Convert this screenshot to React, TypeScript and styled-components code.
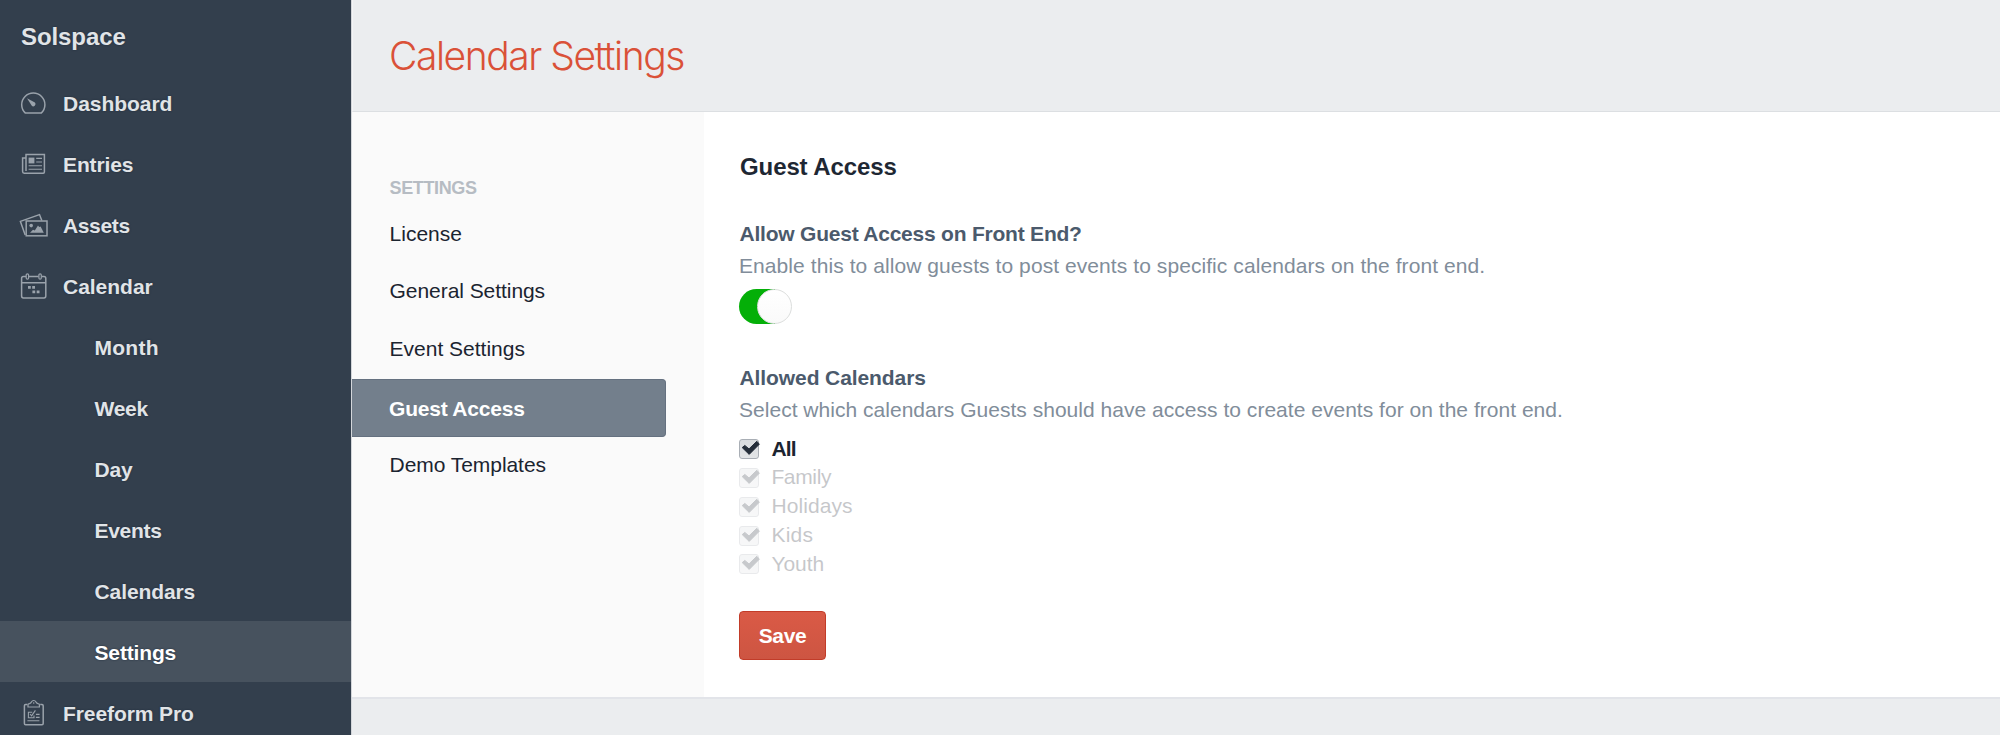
import React from 'react';
import styled, { createGlobalStyle, css } from 'styled-components';

const GlobalStyle = createGlobalStyle`
  * { box-sizing: border-box; }
  body {
    margin: 0;
    overflow: hidden;
    background: #ebedef;
    font-family: "Liberation Sans", Arial, sans-serif;
    font-size: 21px;
    color: #1b2430;
  }
`;

const Page = styled.div`
  display: flex;
  width: 100%;
  height: 735px;
  overflow: hidden;
`;

const Sidebar = styled.nav`
  flex: none;
  width: 351px;
  height: 735px;
  overflow: hidden;
  background: #333f4d;
  color: #e1e4e7;
  font-weight: bold;
  text-shadow: 0 0 2px #1d2a3a;
`;

const SiteName = styled.div`
  height: 72px;
  padding: 8px 0 0 21px;
  font-size: 24px;
  line-height: 57px;
  letter-spacing: -0.08px;
`;

const NavItem = styled.div<{ $nested?: boolean; $active?: boolean }>`
  display: flex;
  align-items: flex-start;
  gap: 12px;
  height: 61px;
  padding-left: ${p => (p.$nested ? 94.5 : 17)}px;
  ${p =>
    p.$active &&
    css`
      background: #47525e;
      color: #fff;
    `}
`;

const NavLabel = styled.span<{ $track: number }>`
  padding-top: 2px;
  line-height: 59px;
  letter-spacing: ${p => p.$track}px;
  white-space: nowrap;
`;

const NavIcon = styled.svg`
  flex: none;
  width: 34px;
  height: 34px;
  margin-top: 13px;
  fill: none;
  stroke: #9aa2ab;
  stroke-width: 1.5;
`;

const Main = styled.div`
  flex: 1;
  display: flex;
  flex-direction: column;
  border-left: 1px solid #d3d6da;
`;

const Header = styled.header`
  height: 112px;
  padding: 32px 0 0 36px;
  border-left: 1px solid #f3f4f5;
  border-bottom: 1px solid #dcdfe2;
`;

const Title = styled.h1`
  margin: 0;
  font: 300 39px/47px Inter, "Liberation Sans", sans-serif;
  letter-spacing: -1.46px;
  color: #da5138;
`;

const Pane = styled.div`
  display: flex;
  height: 587px;
  background: #fff;
  border-bottom: 2px solid #e2e4e9;
`;

const SubNav = styled.aside`
  flex: none;
  width: 352px;
  padding-top: 66px;
  background: #fafafa;
`;

const SubNavHeading = styled.div`
  height: 27.6px;
  padding-left: 37.6px;
  font-size: 18px;
  font-weight: bold;
  line-height: 20px;
  letter-spacing: -0.38px;
  color: #b6bcc3;
`;

const SubNavItem = styled.div<{ $active?: boolean; $track: number }>`
  height: 57.75px;
  padding-left: 37.6px;
  line-height: 55px;
  letter-spacing: ${p => p.$track}px;
  ${p =>
    p.$active &&
    css`
      width: 313.5px;
      padding-left: 37px;
      line-height: 57px;
      font-weight: bold;
      color: #fff;
      background: #737f8c;
      border: 1px solid #657180;
      border-left-width: 0;
      border-radius: 0 4px 4px 0;
    `}
`;

const Content = styled.main`
  padding: 41px 0 0 35px;
`;

const SectionTitle = styled.h2`
  margin: 0 0 37.7px;
  padding-left: 1px;
  font-size: 24px;
  line-height: 27px;
  letter-spacing: -0.1px;
  color: #1e2733;
`;

const Field = styled.section`
  & + & {
    margin-top: 37.8px;
  }
`;

const FieldTitle = styled.h3<{ $track: number }>`
  margin: 0 0 1.5px;
  padding-left: 0.5px;
  font-size: 21px;
  line-height: 31px;
  letter-spacing: ${p => p.$track}px;
  color: #4b5a6c;
`;

const FieldHelp = styled.p<{ $track: number }>`
  margin: 0;
  line-height: 31px;
  letter-spacing: ${p => p.$track}px;
  color: #818d9a;
`;

const Toggle = styled.div`
  display: flex;
  justify-content: flex-end;
  width: 53px;
  height: 35px;
  margin-top: 7.8px;
  border-radius: 18px;
  background: linear-gradient(90deg, #04af08 36px, #fff 36px);
`;

const Knob = styled.span`
  width: 35px;
  height: 35px;
  border: 1px solid #dcdedd;
  border-radius: 50%;
  background: linear-gradient(#fff, #fafafa);
`;

const Options = styled.div`
  margin: 9.3px 0 32px;
`;

const Option = styled.label<{ $disabled?: boolean; $track: number }>`
  display: flex;
  align-items: flex-start;
  height: 28.85px;
  line-height: 27px;
  letter-spacing: ${p => p.$track}px;
  font-weight: ${p => (p.$disabled ? 'normal' : 'bold')};
  opacity: ${p => (p.$disabled ? 0.25 : 1)};
`;

const CheckBox = styled.span`
  flex: none;
  display: block;
  width: 20px;
  height: 20px;
  margin: 4.4px 12.4px 0 0;
  border: 1px solid #a9aeb5;
  border-radius: 3px;
  background: linear-gradient(#d9dcdf, #e2e4e6);
`;

const CheckMark = styled.svg`
  display: block;
  width: 21px;
  height: 18px;
  overflow: visible;
  fill: #252e3a;
  stroke: #252e3a;
  stroke-width: 1;
  stroke-linejoin: round;
`;

const SaveButton = styled.button`
  display: block;
  width: 87px;
  height: 49px;
  padding: 1px 0 0;
  border: 1px solid #c23c29;
  border-radius: 4px;
  background: linear-gradient(#da5a46, #cd5542);
  color: #fff;
  font: bold 21px/45px "Liberation Sans", Arial, sans-serif;
  letter-spacing: -0.4px;
`;

const GaugeIcon = () => (
  <NavIcon viewBox="0 0 34 34">
    <path d="M8.2 27.9 A11.6 11.6 0 1 1 24.4 27.9 Z" strokeLinejoin="round" />
    <path d="M10 13.3 L17.9 17.6 A2.1 2.1 0 1 1 14.6 20.6 Z" fill="#9aa2ab" stroke="none" />
  </NavIcon>
);

const NewsIcon = () => (
  <NavIcon viewBox="0 0 34 34">
    <path d="M9 24 V8.6 H27.4 V26 Q27.4 27.2 26.2 27.2 H7.2 Q5.6 27.2 5.6 25.6 V12 H9 M9 24 V25" />
    <rect x="11.6" y="11.6" width="5.8" height="5.8" fill="#9aa2ab" stroke="none" />
    <path d="M19.2 12.4 H25 M19.2 16 H25 M11.6 19.8 H25 M11.6 23.2 H25" strokeWidth="1.1" />
  </NavIcon>
);

const PhotosIcon = () => (
  <NavIcon viewBox="0 0 34 34">
    <path d="M8.2 28 L3.4 14.4 L22.5 7.6 L24.8 13.6" />
    <rect x="9.2" y="14" width="20.8" height="14.8" />
    <circle cx="14.2" cy="18.6" r="1.8" fill="#9aa2ab" stroke="none" />
    <path d="M13 25.8 L16 22.8 L17.8 23.6 L21 18.6 L22.2 20 L23.6 19.6 L26.8 25.8 Z" fill="#9aa2ab" stroke="none" />
  </NavIcon>
);

const CalendarIcon = () => (
  <NavIcon viewBox="0 0 34 34">
    <path d="M9 8.6 H6.4 Q4.6 8.6 4.6 10.4 V28 Q4.6 29.9 6.4 29.9 H27 Q28.8 29.9 28.8 28 V10.4 Q28.8 8.6 27 8.6 H24.8 M12 8.6 H21.6 M4.6 14.8 H28.8" />
    <rect x="9.2" y="5.8" width="2.4" height="5.4" rx="1.2" strokeWidth="1.2" />
    <rect x="21.9" y="5.8" width="2.4" height="5.4" rx="1.2" strokeWidth="1.2" />
    <path d="M11 18 h2.8 v2.8 h-2.8 z M15.2 18 h2.8 v2.8 h-2.8 z M15.4 22.5 h2.8 v2.8 h-2.8 z M19.7 22.5 h2.8 v2.8 h-2.8 z" fill="#9aa2ab" stroke="none" />
  </NavIcon>
);

const ClipboardIcon = () => (
  <NavIcon viewBox="0 0 34 34">
    <path d="M10.4 9.6 H8.6 Q7.4 9.6 7.4 10.8 V28.6 Q7.4 29.8 8.6 29.8 H25 Q26.2 29.8 26.2 28.6 V10.8 Q26.2 9.6 25 9.6 H23.2" />
    <path d="M11 12 V9.6 Q11 8.8 12.4 8.6 Q14 8.2 14.4 7 Q15.2 5.5 16.7 5.5 Q18.2 5.5 19 7 Q19.4 8.2 21 8.6 Q22.4 8.8 22.4 9.6 V12 Z" strokeWidth="1.2" />
    <circle cx="16.7" cy="8" r="0.8" fill="#9aa2ab" stroke="none" />
    <path d="M15.2 17.2 H11.4 V22.8 H17 V20.4 M13 19 L14.6 20.8 L18.4 15.4 M18.9 19.4 H22.6 M18.9 22.4 H22.6 M10.4 25.8 H22.4" strokeWidth="1.1" />
  </NavIcon>
);

const primaryNav = [
  { label: 'Dashboard', track: -0.04, Icon: GaugeIcon },
  { label: 'Entries', track: -0.13, Icon: NewsIcon },
  { label: 'Assets', track: -0.36, Icon: PhotosIcon },
  { label: 'Calendar', track: -0.02, Icon: CalendarIcon },
];

const calendarNav = [
  { label: 'Month', track: 0.25 },
  { label: 'Week', track: -0.3 },
  { label: 'Day', track: -0.15 },
  { label: 'Events', track: -0.3 },
  { label: 'Calendars', track: -0.1 },
  { label: 'Settings', track: -0.15, active: true },
];

const settingsNav = [
  { label: 'License', track: 0 },
  { label: 'General Settings', track: -0.06 },
  { label: 'Event Settings', track: -0.01 },
  { label: 'Guest Access', track: -0.2, active: true },
  { label: 'Demo Templates', track: -0.06 },
];

const calendars = [
  { label: 'All', track: -0.8 },
  { label: 'Family', track: -0.35, disabled: true },
  { label: 'Holidays', track: 0.1, disabled: true },
  { label: 'Kids', track: 0.25, disabled: true },
  { label: 'Youth', track: -0.05, disabled: true },
];

export default function App() {
  return (
    <>
      <GlobalStyle />
      <Page>
        <Sidebar>
          <SiteName>Solspace</SiteName>
          {primaryNav.map(({ label, track, Icon }) => (
            <NavItem key={label}>
              <Icon />
              <NavLabel $track={track}>{label}</NavLabel>
            </NavItem>
          ))}
          {calendarNav.map(({ label, track, active }) => (
            <NavItem key={label} $nested $active={active}>
              <NavLabel $track={track}>{label}</NavLabel>
            </NavItem>
          ))}
          <NavItem>
            <ClipboardIcon />
            <NavLabel $track={-0.09}>Freeform Pro</NavLabel>
          </NavItem>
        </Sidebar>
        <Main>
          <Header>
            <Title>Calendar Settings</Title>
          </Header>
          <Pane>
            <SubNav>
              <SubNavHeading>SETTINGS</SubNavHeading>
              {settingsNav.map(({ label, track, active }) => (
                <SubNavItem key={label} $track={track} $active={active}>
                  {label}
                </SubNavItem>
              ))}
            </SubNav>
            <Content>
              <SectionTitle>Guest Access</SectionTitle>
              <Field>
                <FieldTitle $track={-0.22}>Allow Guest Access on Front End?</FieldTitle>
                <FieldHelp $track={0.074}>
                  Enable this to allow guests to post events to specific calendars on the front end.
                </FieldHelp>
                <Toggle>
                  <Knob />
                </Toggle>
              </Field>
              <Field>
                <FieldTitle $track={-0.09}>Allowed Calendars</FieldTitle>
                <FieldHelp $track={0.024}>
                  Select which calendars Guests should have access to create events for on the front end.
                </FieldHelp>
                <Options>
                  {calendars.map(({ label, track, disabled }) => (
                    <Option key={label} $track={track} $disabled={disabled}>
                      <CheckBox>
                        <CheckMark viewBox="0 0 21 18">
                          <path d="M2.2 7.6 L4.8 5.4 L9 8.9 L16.8 1.3 L19.3 4.2 L9.2 14.4 Z" />
                        </CheckMark>
                      </CheckBox>
                      {label}
                    </Option>
                  ))}
                </Options>
              </Field>
              <SaveButton type="button">Save</SaveButton>
            </Content>
          </Pane>
        </Main>
      </Page>
    </>
  );
}
